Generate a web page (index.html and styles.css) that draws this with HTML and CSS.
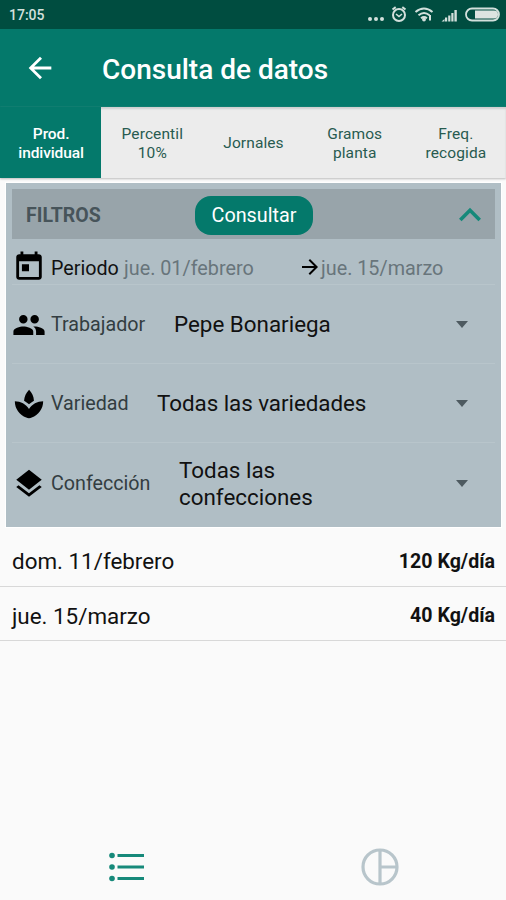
FILE: index.html
```html
<!DOCTYPE html>
<html lang="es">
<head>
    <meta charset="UTF-8">
    <meta name="viewport" content="width=device-width, initial-scale=1.0">
    <title>Consulta de datos</title>
    <link rel="stylesheet" href="styles.css">
</head>
<body>
    <div class="status-bar">
        <span class="hora">17:05</span>
        <svg width="136" height="29" viewBox="0 0 136 29">
            <g fill="#d3e0dc">
                <circle cx="2" cy="19" r="2"/><circle cx="8" cy="19" r="2"/><circle cx="14" cy="19" r="2"/>
                <path d="M73.500 21.500l3-2.500v2.500zM77 21.500v-4h2.200v4zM80.200 21.500v-6h2.200v6zM83.300 21.500v-8.500h2.200v8.500zM86.400 21.500V10h2.400v11.500z"/>
            </g>
            <g fill="none" stroke="#d3e0dc">
                <circle cx="31" cy="15" r="6" stroke-width="2"/>
                <path d="M24.500 9.500l3.200-2.400M37.500 9.500l-3.200-2.400" stroke-width="2"/>
                <path d="M28 14l3 2.500 3-2.500" stroke-width="1.600"/>
                <path d="M47.500 12q8.500-7 17 0M50.500 15.200q5.500-4.500 11 0M53 18.300q3-2.300 6 0" stroke-width="2"/>
                <path d="M62 15v5.500" stroke-width="2"/>
                <rect x="98" y="8.500" width="33" height="12" rx="6" stroke-width="1.800"/>
            </g>
            <circle cx="56" cy="19.500" r="1.900" fill="#d3e0dc"/>
            <path d="M107 10.500h19a4 4 0 0 1 0 8h-19z" fill="#dce4e1"/>
        </svg>
    </div>

    <header class="app-bar">
        <svg class="icono" viewBox="0 0 24 24"><path d="M20 11H7.830l5.590-5.590L12 4l-8 8 8 8 1.410-1.410L7.830 13H20v-2z"/></svg>
        <h1>Consulta de datos</h1>
    </header>

    <nav class="tabs">
        <div class="tab activa">Prod.<br>individual</div>
        <div class="tab">Percentil<br>10%</div>
        <div class="tab">Jornales</div>
        <div class="tab">Gramos<br>planta</div>
        <div class="tab">Freq.<br>recogida</div>
    </nav>

    <section class="filtros">
        <div class="filtros-cabecera">
            <h2>FILTROS</h2>
            <button class="consultar">Consultar</button>
            <svg class="icono plegar" viewBox="0 0 24 24"><path d="M12 8l-6 6 1.410 1.410L12 10.830l4.590 4.580L18 14z"/></svg>
        </div>

        <div class="fila periodo">
            <svg class="icono" viewBox="0 0 24 24"><path d="M19 3h-1V1h-2v2H8V1H6v2H5c-1.110 0-1.990.9-1.990 2L3 19c0 1.100.890 2 2 2h14c1.100 0 2-.9 2-2V5c0-1.100-.9-2-2-2zm0 16H5V8h14v11zM7 10h5v5H7z"/></svg>
            <span class="etiqueta">Periodo</span>
            <span class="fecha desde">jue. 01/febrero</span>
            <svg class="flecha" viewBox="4 4 16 16"><path d="M12 4l-1.410 1.410L16.170 11H4v2h12.170l-5.580 5.590L12 20l8-8z"/></svg>
            <span class="fecha hasta">jue. 15/marzo</span>
        </div>

        <div class="fila">
            <svg class="icono" viewBox="0 0 24 24"><path d="M16 11c1.660 0 2.990-1.340 2.990-3S17.660 5 16 5c-1.660 0-3 1.340-3 3s1.340 3 3 3zm-8 0c1.660 0 2.990-1.340 2.990-3S9.660 5 8 5C6.340 5 5 6.340 5 8s1.340 3 3 3zm0 2c-2.330 0-7 1.170-7 3.500V19h14v-2.500c0-2.330-4.670-3.500-7-3.500zm8 0c-.29 0-.62.020-.97.050 1.160.840 1.970 1.970 1.970 3.450V19h6v-2.500c0-2.330-4.670-3.500-7-3.500z"/></svg>
            <span class="etiqueta trabajador">Trabajador</span>
            <span class="valor">Pepe Bonariega</span>
            <span class="desplegar"></span>
        </div>

        <div class="fila">
            <svg class="icono" viewBox="0 0 24 24"><path d="M15.490 9.630c-.180-2.790-1.310-5.510-3.430-7.630-2.140 2.140-3.320 4.860-3.550 7.630 1.280.680 2.460 1.560 3.490 2.630 1.030-1.060 2.210-1.940 3.490-2.630zM12 15.450C9.850 12.170 6.180 10 2 10c0 5.320 3.360 9.820 8.030 11.490.630.230 1.290.400 1.970.510.680-.12 1.330-.29 1.970-.51C18.640 19.820 22 15.320 22 10c-4.180 0-7.850 2.170-10 5.450z"/></svg>
            <span class="etiqueta variedad">Variedad</span>
            <span class="valor variedades">Todas las variedades</span>
            <span class="desplegar"></span>
        </div>

        <div class="fila">
            <svg class="icono" viewBox="0 0 24 24"><path d="M11.990 18.540l-7.370-5.730L3 14.070l9 7 9-7-1.630-1.270zM12 16l7.360-5.730L21 9l-9-7-9 7 1.630 1.270z"/></svg>
            <span class="etiqueta confeccion">Confección</span>
            <span class="valor">Todas las<br>confecciones</span>
            <span class="desplegar"></span>
        </div>
    </section>

    <main class="resultados">
        <div class="resultado"><span class="dia">dom. 11/febrero</span><strong>120 Kg/día</strong></div>
        <div class="resultado"><span class="dia">jue. 15/marzo</span><strong>40 Kg/día</strong></div>
    </main>

    <footer class="menu-inferior">
        <div class="opcion">
            <svg width="36" height="30" viewBox="0 0 36 30" fill="#16897a">
                <circle cx="3" cy="3.500" r="2.800"/><circle cx="3" cy="15" r="2.800"/><circle cx="3" cy="26.500" r="2.800"/>
                <path d="M8.500 2H35v3H8.500zM8.500 13.500H35v3H8.500zM8.500 25H35v3H8.500z"/>
            </svg>
        </div>
        <div class="opcion">
            <svg width="38" height="38" viewBox="0 0 38 38" fill="none" stroke="#b8c5cb" stroke-width="3.200">
                <circle cx="19" cy="19" r="17"/>
                <path d="M19 2v34M19 19h17"/>
            </svg>
        </div>
    </footer>
</body>
</html>
```

FILE: styles.css
```css
* {
    box-sizing: border-box;
}
body {
    margin: 0;
    height: 900px;
    display: flex;
    flex-direction: column;
    background-color: #fafafa;
    font-family: Roboto, 'Liberation Sans', sans-serif;
    color: #111;
    overflow: hidden;
}
h1, h2 {
    margin: 0;
}
.icono {
    width: 34px;
    height: 34px;
    flex: none;
}

/* Barra de estado */
.status-bar {
    height: 29px;
    display: flex;
    justify-content: space-between;
    background-color: #004d40;
    padding: 0 2px 0 9px;
}
.hora {
    font-size: 14px;
    font-weight: 500;
    line-height: 30px;
    color: #d3e0dc;
}

/* Cabecera */
.app-bar {
    height: 78px;
    display: flex;
    align-items: center;
    padding-left: 23px;
    background-color: #04796b;
}
.app-bar .icono {
    fill: #fff;
}
.app-bar h1 {
    margin-left: 45px;
    padding-top: 2px;
    font-size: 28px;
    font-weight: 500;
    color: #fff;
}

/* Tabs */
.tabs {
    height: 71px;
    display: flex;
    background-color: #ececec;
    box-shadow: inset 0 2px 2px #cfcfcf, 0 1px 2px #bbb;
}
.tab {
    flex: 1;
    display: flex;
    align-items: center;
    justify-content: center;
    padding: 2px 0 0 1px;
    text-align: center;
    font-size: 15.5px;
    line-height: 18.5px;
    letter-spacing: 0.1px;
    color: #285b50;
}
.tab.activa {
    background-color: #04796b;
    color: #fff;
    font-weight: 500;
    letter-spacing: -0.1px;
}

/* Filtros */
.filtros {
    height: 344px;
    margin: 5px 5px 0 6px;
    padding: 6px 6px 0;
    background-color: #b0bec5;
    outline: 1px solid #fff;
}
.filtros-cabecera {
    height: 50px;
    display: flex;
    align-items: center;
    background-color: #98a4aa;
    padding: 2px 8px 0 14px;
}
.filtros-cabecera h2 {
    width: 169px;
    font-size: 19.5px;
    font-weight: 700;
    color: #47545a;
}
.consultar {
    width: 118px;
    height: 39px;
    padding: 0;
    border: none;
    border-radius: 16px;
    background-color: #04796b;
    color: #fff;
    font-family: inherit;
    font-size: 19.8px;
}
.plegar {
    width: 44px;
    height: 44px;
    margin: 0 -5px 0 auto;
    fill: #16897a;
}
.fila {
    height: 79px;
    display: flex;
    align-items: center;
    padding-top: 1px;
    border-bottom: 1px solid #b8c5cb;
}
.fila:last-child {
    padding-top: 2px;
    border-bottom: none;
}
.fila.periodo {
    height: 46px;
}
.periodo .icono {
    margin-top: 10px;
}
.periodo .etiqueta,
.periodo .fecha {
    padding-top: 12px;
}
.etiqueta {
    margin-left: 5px;
    font-size: 19.7px;
    white-space: nowrap;
    color: #333d41;
}
.periodo .etiqueta {
    width: 73px;
    color: #111;
}
.trabajador {
    width: 123px;
}
.variedad {
    width: 106px;
}
.confeccion {
    width: 128px;
}
.fecha {
    font-size: 19.8px;
    white-space: nowrap;
    color: #68757b;
}
.desde {
    width: 178px;
}
.flecha {
    width: 16px;
    height: 16px;
    margin: 10px 3px 0 0;
}
.valor {
    font-size: 22.4px;
    line-height: 26.5px;
    white-space: nowrap;
}
.variedades {
    letter-spacing: -0.05px;
}
.desplegar {
    margin: 0 27px 0 auto;
    border: 6.5px solid transparent;
    border-top: 7px solid #4d5a60;
    border-bottom: none;
}

/* Lista de resultados */
.resultados {
    padding-top: 5px;
}
.resultado {
    height: 54.5px;
    display: flex;
    align-items: center;
    justify-content: space-between;
    padding: 5px 11px 0 12px;
    border-bottom: 1px solid #d8d8d8;
}
.dia {
    font-size: 22.4px;
}
.resultado strong {
    font-size: 19.6px;
    font-weight: 700;
}

/* Menú inferior */
.menu-inferior {
    height: 66px;
    margin-top: auto;
    display: flex;
}
.opcion {
    flex: 1;
    display: flex;
    align-items: center;
    justify-content: center;
}
```
